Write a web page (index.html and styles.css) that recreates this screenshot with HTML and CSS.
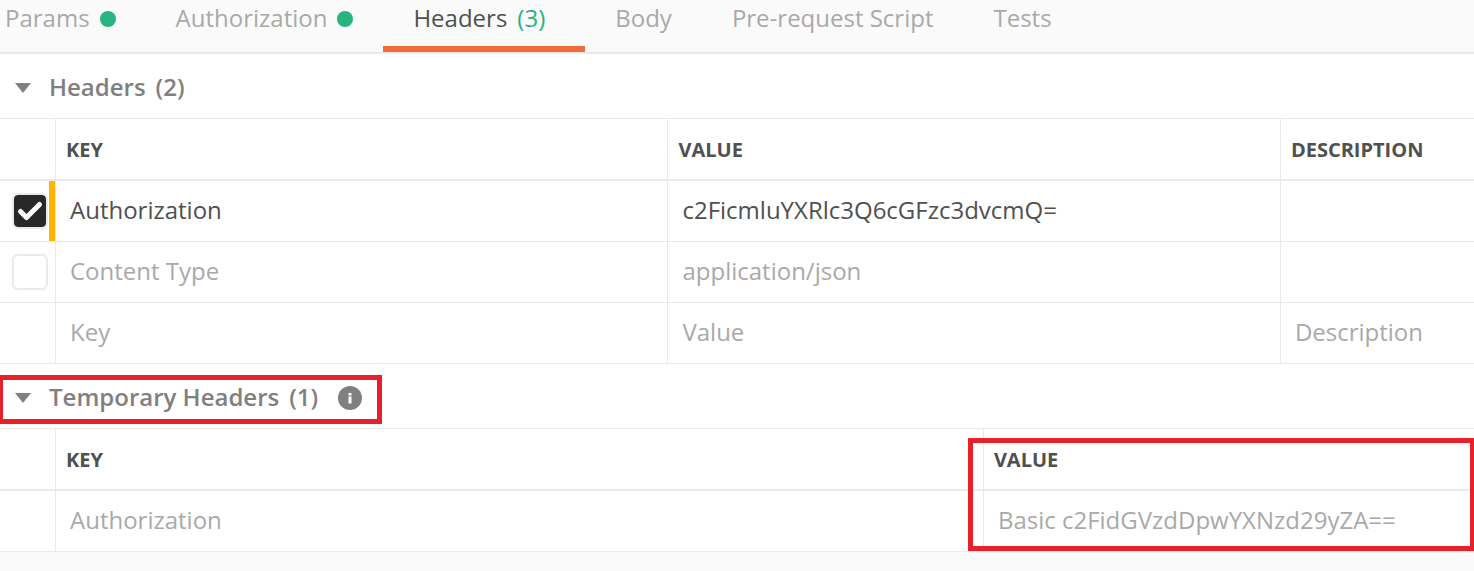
FILE: index.html
```html
<!DOCTYPE html>
<html lang="en">
<head>
<meta charset="utf-8">
<title>Request headers</title>
<link rel="stylesheet" href="styles.css">
</head>
<body>
<nav class="tabs" aria-label="Request">
  <button class="tab" type="button">Params <span class="dot"></span></button>
  <button class="tab" type="button">Authorization <span class="dot"></span></button>
  <button class="tab active" type="button" aria-current="true">Headers <span class="count">(3)</span></button>
  <button class="tab" type="button">Body</button>
  <button class="tab" type="button">Pre-request Script</button>
  <button class="tab" type="button">Tests</button>
</nav>
<main>
  <section class="panel">
    <h2 class="panel-head">
      <button class="toggle" type="button" aria-expanded="true">
        <svg class="caret" viewBox="0 0 16 10" aria-hidden="true"><path d="M0 0h16L8 10z"/></svg>
        <span class="title">Headers <span>(2)</span></span>
      </button>
    </h2>
    <table class="grid">
      <colgroup><col class="col-check"><col class="col-half"><col class="col-half"><col></colgroup>
      <thead>
        <tr><th></th><th scope="col">KEY</th><th scope="col">VALUE</th><th scope="col">DESCRIPTION</th></tr>
      </thead>
      <tbody>
        <tr class="enabled">
          <td class="check-cell marked">
            <label class="check">
              <input type="checkbox" checked aria-label="Authorization">
              <svg viewBox="0 0 36 36" aria-hidden="true"><path d="M8.500 18.500l6 6L27.500 11.500"/></svg>
            </label>
          </td>
          <td>Authorization</td><td>c2FicmluYXRlc3Q6cGFzc3dvcmQ=</td><td></td>
        </tr>
        <tr>
          <td class="check-cell">
            <label class="check"><input type="checkbox" aria-label="Content Type"></label>
          </td>
          <td>Content Type</td><td>application/json</td><td></td>
        </tr>
        <tr>
          <td></td>
          <td><input class="field" type="text" placeholder="Key" aria-label="Key"></td>
          <td><input class="field" type="text" placeholder="Value" aria-label="Value"></td>
          <td><input class="field" type="text" placeholder="Description" aria-label="Description"></td>
        </tr>
      </tbody>
    </table>
  </section>
  <section class="panel">
    <h2 class="panel-head">
      <button class="toggle" type="button" aria-expanded="true">
        <svg class="caret" viewBox="0 0 16 10" aria-hidden="true"><path d="M0 0h16L8 10z"/></svg>
        <span class="title">Temporary Headers <span>(1)</span></span>
        <svg class="info" viewBox="0 0 24 24" aria-hidden="true"><circle cx="12" cy="12" r="12"/><path d="M10.500 7h3v2.500h-3zM10.500 10.500h3v7h-3z"/></svg>
      </button>
      <span class="callout callout-title"></span>
    </h2>
    <div class="table-wrap">
      <table class="grid">
        <colgroup><col class="col-check"><col class="col-wide"><col></colgroup>
        <thead>
          <tr><th></th><th scope="col">KEY</th><th scope="col">VALUE</th></tr>
        </thead>
        <tbody>
          <tr><td></td><td>Authorization</td><td>Basic c2FidGVzdDpwYXNzd29yZA==</td></tr>
        </tbody>
      </table>
      <span class="callout callout-value"></span>
    </div>
  </section>
</main>
</body>
</html>
```
FILE: styles.css
```css
* { box-sizing: border-box; }

body {
  margin: 0;
  overflow-x: hidden;
  background: #fafafa;
  color: #a9a9a9;
  font: 24px/36px "Open Sans", "Noto Sans", sans-serif;
}

button, input { font: inherit; color: inherit; }

button {
  padding: 0;
  border: 0;
  background: none;
  cursor: pointer;
}

.tabs {
  display: flex;
  padding-left: 5px;
  border-bottom: 2px solid #eaeaea;
}

.tab {
  display: flex;
  align-items: center;
  gap: 10px;
  padding: 0 30px 10px;
  border-bottom: 6px solid transparent;
  white-space: nowrap;
}

.tab:first-child { padding-left: 0; }
.tab.active { padding-right: 40px; border-color: #f26b3a; color: #505050; }
.count { color: #26b47f; }

.dot {
  width: 16px;
  height: 16px;
  margin-top: 2px;
  border-radius: 50%;
  background: #26b47f;
}

.panel { background: #fff; overflow: hidden; }

.panel-head {
  position: relative;
  display: flex;
  align-items: center;
  height: 64px;
  margin: 0;
  padding: 2px 0 0 15px;
  color: #808080;
  font-size: 24px;
  font-weight: 600;
}

.toggle { display: flex; align-items: center; }

.title {
  display: flex;
  gap: 10px;
  margin: 0 20px 0 18px;
}

.caret, .info { margin-top: 2px; fill: #808080; }
.caret { width: 16px; height: 10px; }
.info { width: 24px; height: 24px; }
.info path { fill: #fff; }

.grid {
  width: 100%;
  table-layout: fixed;
  border-collapse: separate;
  border-spacing: 0;
  border-top: 1px solid #eaeaea;
}

.col-check { width: 56px; }
.col-half { width: 41.55%; }
.col-wide { width: 62.95%; }

.grid th, .grid td {
  border-right: 1px solid #eaeaea;
  text-align: left;
  white-space: nowrap;
}

.grid th:last-child, .grid td:last-child { border-right: 0; }

.grid th {
  height: 62px;
  padding: 2px 10px 0;
  border-bottom: 2px solid #eaeaea;
  color: #505050;
  font-size: 20px;
  font-weight: 700;
}

.grid td {
  height: 61px;
  padding: 0 14px 2px;
  border-bottom: 1px solid #eaeaea;
}

.enabled { color: #505050; }

.grid .check-cell { padding: 0 0 0 12px; }
.grid .marked { box-shadow: inset -6px 0 #ffb400; }

.check {
  display: grid;
  width: 36px;
  height: 36px;
}

.check input, .check svg {
  grid-area: 1 / 1;
  width: 36px;
  height: 36px;
  margin: 0;
}

.check input {
  appearance: none;
  border: 2px solid #eaeaea;
  border-radius: 6px;
  background: #fff;
}

.check input:checked { background: #282828 padding-box; }

.check svg {
  z-index: 1;
  fill: none;
  stroke: #fff;
  stroke-width: 5;
  stroke-linecap: round;
  stroke-linejoin: round;
  pointer-events: none;
}

.field {
  display: block;
  width: 100%;
  height: 36px;
  padding: 0;
  border: 0;
  outline: 0;
  background: none;
}

.field::placeholder { color: #a9a9a9; opacity: 1; }

.table-wrap { position: relative; }

.callout {
  position: absolute;
  border: 5px solid #e62129;
  pointer-events: none;
}

.callout-title { top: 11px; bottom: 4px; left: -2px; width: 384px; }
.callout-value { top: 10px; right: -1px; bottom: 1px; left: calc(63% + 39px); }
```
